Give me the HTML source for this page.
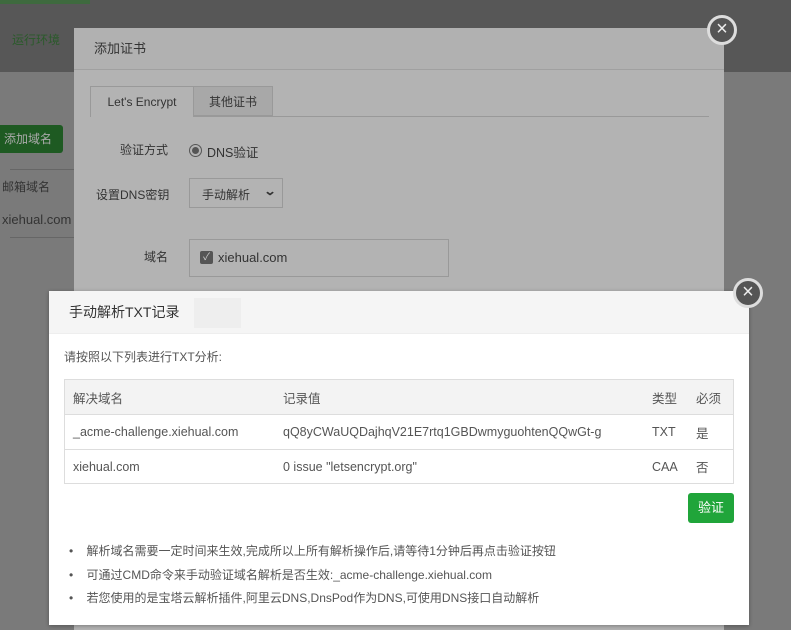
<!DOCTYPE html>
<html><head><meta charset="utf-8"><style>
*{margin:0;padding:0;box-sizing:border-box}
body{width:791px;height:630px;overflow:hidden;position:relative;background:#6e6e6e;font-family:"Liberation Sans","Noto Sans CJK SC",sans-serif;font-size:13px;color:#333}
.abs{position:absolute}
.close{position:absolute;width:30px;height:30px;border-radius:50%;border:3px solid #ddd;background:#555;color:#eee;text-align:center;line-height:23px;font-size:20px}
</style></head><body>
<div class="abs" style="left:0;top:0;width:791px;height:72px;background:#575757"></div>
<div class="abs" style="left:0;top:0;width:90px;height:4px;background:#3e6a3e"></div>
<div class="abs" style="left:12px;top:31px;color:#2a5a2a;font-size:12px">运行环境</div>
<div class="abs" style="left:0;top:72px;width:791px;height:558px;background:#7a7a7a"></div>
<div class="abs" style="left:0;top:125px;width:63px;height:28px;background:#1e5a22;color:#aaa;font-size:12px;line-height:28px;padding-left:4px;border-radius:0 3px 3px 0">添加域名</div>
<div class="abs" style="left:2px;top:178px;color:#333;font-size:12px">邮箱域名</div>
<div class="abs" style="left:10px;top:169px;width:65px;height:1px;background:#666"></div>
<div class="abs" style="left:2px;top:212px;color:#333;font-size:13px">xiehual.com</div>
<div class="abs" style="left:10px;top:237px;width:65px;height:1px;background:#666"></div>

<div class="abs" style="left:74px;top:28px;width:650px;height:602px;background:#b3b3b3">
  <div style="height:42px;border-bottom:1px solid #a0a0a0;background:#b1b1b1;padding:10px 20px;font-size:13px;color:#333">添加证书</div>
  <div class="abs" style="left:16px;top:88px;width:619px;height:1px;background:#999"></div>
  <div class="abs" style="left:16px;top:58px;width:104px;height:31px;border:1px solid #999;border-bottom:none;background:#b3b3b3;text-align:center;line-height:30px;font-size:12px">Let's Encrypt</div>
  <div class="abs" style="left:120px;top:58px;width:79px;height:30px;border:1px solid #999;border-left:none;background:#a8a8a8;text-align:center;line-height:30px;font-size:12px">其他证书</div>
  <div class="abs" style="left:46px;top:113px;font-size:12px">验证方式</div>
  <div class="abs" style="left:115px;top:116px;width:13px;height:13px;border-radius:50%;border:1px solid #555"><div style="margin:2px;width:7px;height:7px;border-radius:50%;background:#555"></div></div>
  <div class="abs" style="left:133px;top:114px;font-size:12.5px">DNS验证</div>
  <div class="abs" style="left:22px;top:158px;font-size:12px">设置DNS密钥</div>
  <div class="abs" style="left:115px;top:150px;width:94px;height:30px;border:1px solid #999;padding:7px 12px;font-size:12px">手动解析 <span style="position:absolute;right:7px;top:5px;font-size:12px;font-weight:bold;transform:scaleX(1.3)">&#8964;</span></div>
  <div class="abs" style="left:70px;top:220px;font-size:12px">域名</div>
  <div class="abs" style="left:115px;top:211px;width:260px;height:38px;border:1px solid #999"></div>
  <div class="abs" style="left:126px;top:223px;width:13px;height:13px;background:#555;border-radius:2px;color:#ccc;font-size:10px;line-height:13px;text-align:center">✓</div>
  <div class="abs" style="left:144px;top:222px;font-size:13px">xiehual.com</div>
</div>
<div class="close" style="left:707px;top:15px">×</div>

<div class="abs" style="left:49px;top:291px;width:700px;height:334px;background:#fff;box-shadow:0 1px 4px rgba(0,0,0,.3)">
  <div style="height:43px;background:#f5f5f5;border-bottom:1px solid #eee;padding:11px 20px;font-size:14px;color:#333">手动解析TXT记录</div>
  <div class="abs" style="left:145px;top:7px;width:47px;height:30px;background:#eee"></div>
  <div class="abs" style="left:15px;top:57px;font-size:12px;color:#555">请按照以下列表进行TXT分析:</div>
  <table class="abs" style="left:15px;top:88px;width:670px;border-collapse:collapse;font-size:12.5px;color:#555">
    <tr style="background:#f3f3f3;height:35px"><td style="padding-left:9px;width:219px;border-top:1px solid #ddd">解决域名</td><td style="border-top:1px solid #ddd">记录值</td><td style="width:44px;border-top:1px solid #ddd">类型</td><td style="width:38px;border-top:1px solid #ddd">必须</td></tr>
    <tr style="height:35px;border-top:1px solid #ddd"><td style="padding-left:9px">_acme-challenge.xiehual.com</td><td>qQ8yCWaUQDajhqV21E7rtq1GBDwmyguohtenQQwGt-g</td><td>TXT</td><td>是</td></tr>
    <tr style="height:34px;border-top:1px solid #ddd;border-bottom:1px solid #ddd"><td style="padding-left:9px">xiehual.com</td><td>0 issue "letsencrypt.org"</td><td>CAA</td><td>否</td></tr>
  </table>
  <div style="position:absolute;left:15px;top:88px;width:670px;height:105px;border-left:1px solid #ddd;border-right:1px solid #ddd"></div>
  <div class="abs" style="left:639px;top:202px;width:46px;height:30px;background:#20a53a;color:#fff;border-radius:3px;text-align:center;line-height:30px;font-size:13px">验证</div>
  <div class="abs" style="left:20px;top:249px;font-size:12px;color:#555;line-height:23.5px">
    <div>•&nbsp;&nbsp;&nbsp;&nbsp;解析域名需要一定时间来生效,完成所以上所有解析操作后,请等待1分钟后再点击验证按钮</div>
    <div>•&nbsp;&nbsp;&nbsp;&nbsp;可通过CMD命令来手动验证域名解析是否生效:_acme-challenge.xiehual.com</div>
    <div>•&nbsp;&nbsp;&nbsp;&nbsp;若您使用的是宝塔云解析插件,阿里云DNS,DnsPod作为DNS,可使用DNS接口自动解析</div>
  </div>
</div>
<div class="close" style="left:733px;top:278px">×</div>
</body></html>
